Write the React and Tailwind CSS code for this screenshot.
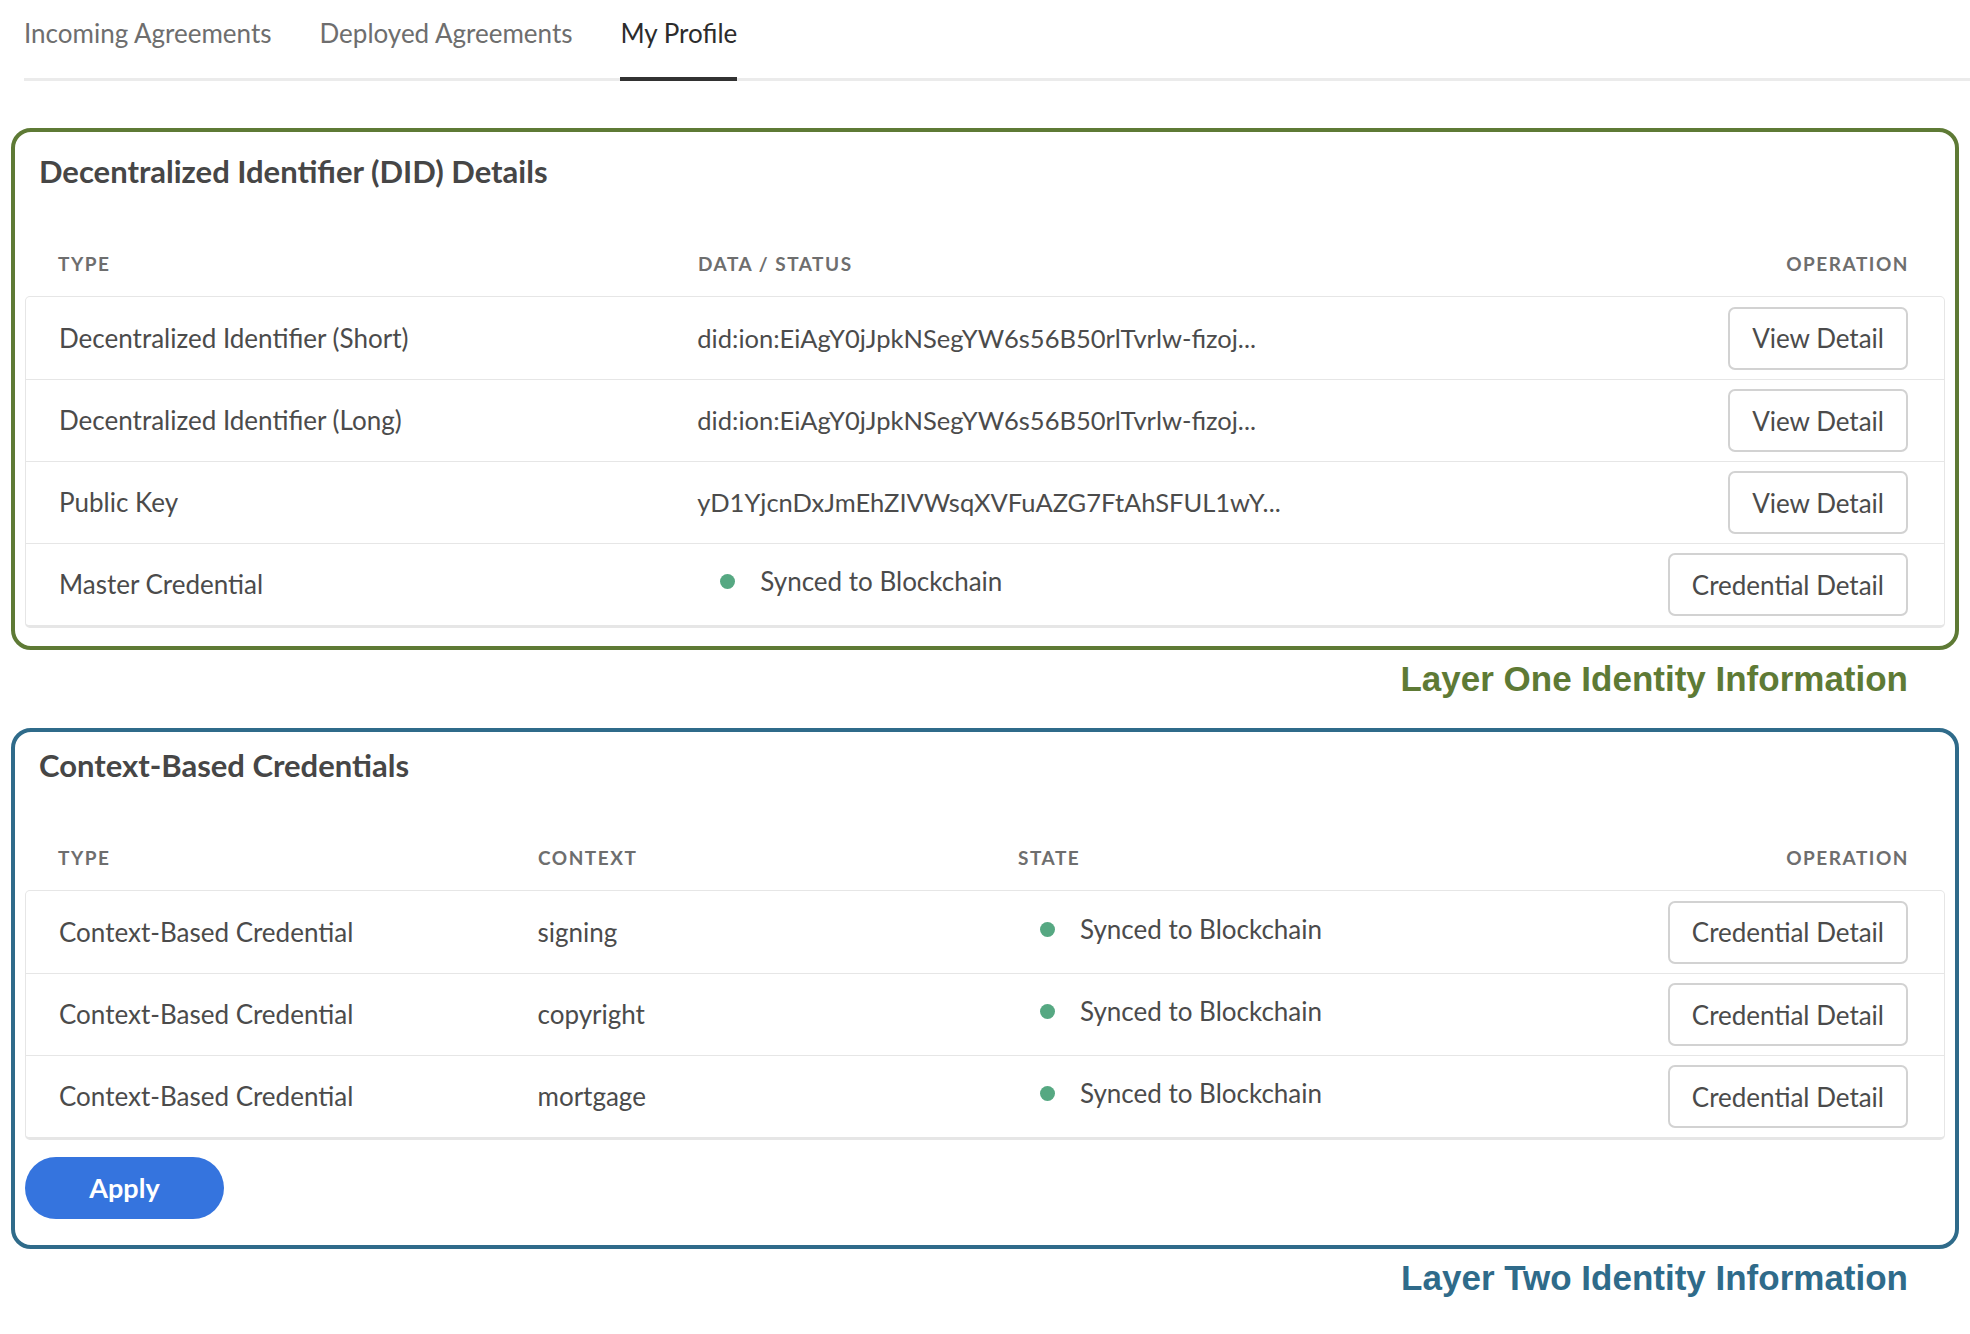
import React from 'react';

const tabs = ['Incoming Agreements', 'Deployed Agreements', 'My Profile'];

const didRows = [
    { type: 'Decentralized Identifier (Short)', data: 'did:ion:EiAgY0jJpkNSegYW6s56B50rlTvrlw-fizoj...', action: 'View Detail' },
    { type: 'Decentralized Identifier (Long)', data: 'did:ion:EiAgY0jJpkNSegYW6s56B50rlTvrlw-fizoj...', action: 'View Detail' },
    { type: 'Public Key', data: 'yD1YjcnDxJmEhZIVWsqXVFuAZG7FtAhSFUL1wY...', action: 'View Detail' },
    { type: 'Master Credential', status: 'Synced to Blockchain', action: 'Credential Detail' },
];

const contextRows = ['signing', 'copyright', 'mortgage'];

function StatusLight({ label }) {
    return (
        <span className="flex items-center -mt-[6px] pl-[23px] text-[26px]">
            <span className="w-[15px] h-[15px] rounded-full bg-[#56a882]"></span>
            <span className="ml-[25px]">{label}</span>
        </span>
    );
}

function OutlineButton({ children }) {
    return (
        <button className="h-[63px] px-[22px] border-2 border-[#d2d2d2] rounded-[7px] bg-white text-[26px] leading-none text-[#4b4b4b]">
            {children}
        </button>
    );
}

function HeaderCell({ children, right }) {
    return (
        <div className={`text-[19px] leading-[20px] font-bold tracking-[0.08em] uppercase text-[#6e6e6e] ${right ? 'text-right pr-[36px]' : 'pl-[33px]'}`}>
            {children}
        </div>
    );
}

export default function App() {
    return (
        <div className="min-h-screen bg-white font-['Lato',sans-serif] text-[#4b4b4b]">
            {/* Tabs */}
            <nav className="ml-[24px] flex gap-[48px] border-b-[3px] border-[#ebebeb] h-[81px]">
                {tabs.map((tab, i) => (
                    <div
                        key={tab}
                        className={`pt-[14px] text-[26px] ${i === 2 ? 'text-[#2c2c2c] border-b-4 border-[#323232] -mb-[3px]' : 'text-[#6e6e6e]'}`}
                    >
                        {tab}
                    </div>
                ))}
            </nav>

            {/* Layer one */}
            <section className="mx-[11px] mt-[47px] border-4 border-[#5e7a35] rounded-[20px] px-[10px] pt-[23px] pb-[18px]">
                <h2 className="px-[14px] text-[31px] leading-[32px] font-bold text-[#464646]">
                    Decentralized Identifier (DID) Details
                </h2>
                <div className="grid grid-cols-3 mt-[67px] mb-[22px]">
                    <HeaderCell>Type</HeaderCell>
                    <HeaderCell>Data / Status</HeaderCell>
                    <HeaderCell right>Operation</HeaderCell>
                </div>
                <div className="border border-[#e6e6e6] border-b-[3px] rounded-[5px] text-[26px]">
                    {didRows.map((row, i) => (
                        <div key={i} className={`grid grid-cols-3 items-center h-[82px] ${i > 0 ? 'border-t border-[#e6e6e6]' : ''}`}>
                            <div className="pl-[33px]">{row.type}</div>
                            <div className="pl-[32px] text-[25.5px]">
                                {row.status ? <StatusLight label={row.status} /> : row.data}
                            </div>
                            <div className="flex justify-end pr-[36px]">
                                <OutlineButton>{row.action}</OutlineButton>
                            </div>
                        </div>
                    ))}
                </div>
            </section>
            <p className="mt-[11px] pr-[62px] text-right font-['Liberation_Sans',Arial,sans-serif] font-bold text-[35px] leading-[36px] text-[#5e7a35]">
                Layer One Identity Information
            </p>

            {/* Layer two */}
            <section className="mx-[11px] mt-[31px] border-4 border-[#2f6b8a] rounded-[20px] px-[10px] pt-[17px] pb-[26px]">
                <h2 className="px-[14px] text-[31px] leading-[32px] font-bold text-[#464646]">
                    Context-Based Credentials
                </h2>
                <div className="grid grid-cols-4 mt-[67px] mb-[22px]">
                    <HeaderCell>Type</HeaderCell>
                    <HeaderCell>Context</HeaderCell>
                    <HeaderCell>State</HeaderCell>
                    <HeaderCell right>Operation</HeaderCell>
                </div>
                <div className="border border-[#e6e6e6] border-b-[3px] rounded-[5px] text-[26px]">
                    {contextRows.map((ctx, i) => (
                        <div key={ctx} className={`grid grid-cols-4 items-center h-[82px] ${i > 0 ? 'border-t border-[#e6e6e6]' : ''}`}>
                            <div className="pl-[33px]">Context-Based Credential</div>
                            <div className="pl-[32px]">{ctx}</div>
                            <div className="pl-[32px]">
                                <StatusLight label="Synced to Blockchain" />
                            </div>
                            <div className="flex justify-end pr-[36px]">
                                <OutlineButton>Credential Detail</OutlineButton>
                            </div>
                        </div>
                    ))}
                </div>
                <button className="mt-[17px] w-[199px] h-[62px] rounded-full bg-[#3574de] text-white text-[27px] font-bold">
                    Apply
                </button>
            </section>
            <p className="mt-[11px] pr-[62px] text-right font-['Liberation_Sans',Arial,sans-serif] font-bold text-[35px] leading-[36px] text-[#2f6b8a]">
                Layer Two Identity Information
            </p>
        </div>
    );
}
